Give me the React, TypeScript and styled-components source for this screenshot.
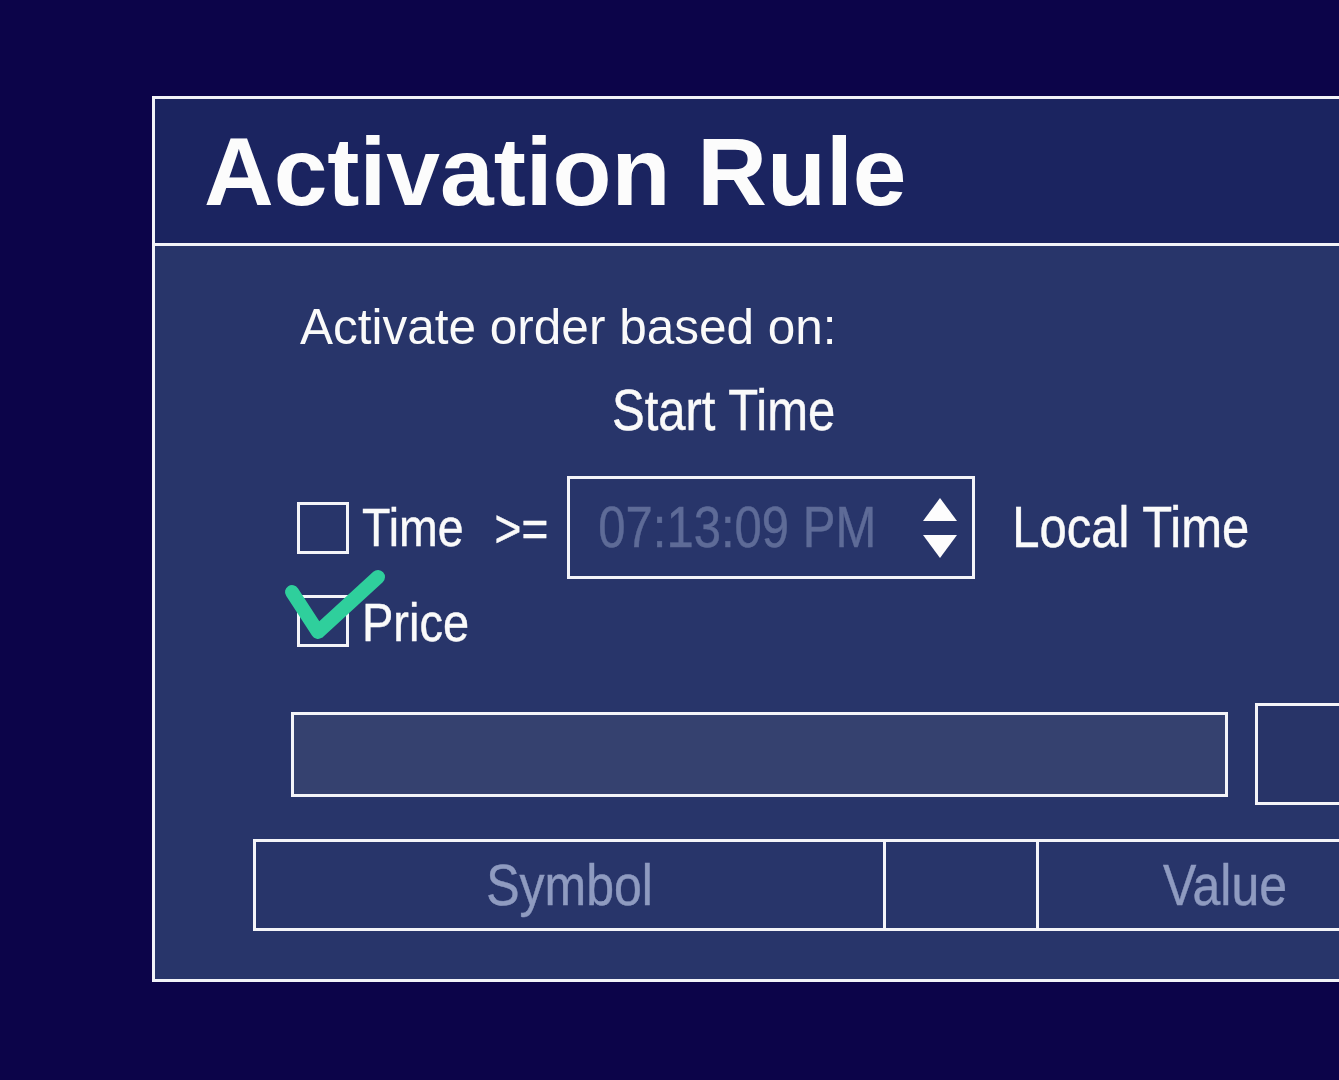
import React from 'react'
import styled, { createGlobalStyle } from 'styled-components'

const GlobalStyle = createGlobalStyle`
    html, body {
        margin: 0;
        padding: 0;
        background: #0c0449;
        overflow: hidden;
    }
    body {
        font-family: "Liberation Sans", Arial, sans-serif;
        color: #fafafa;
    }
`

const Page = styled.div`
    width: 1339px;
    height: 1080px;
    overflow: hidden;
    box-sizing: border-box;
    padding: 96px 0 0 152px;
    background: #0c0449;
`

const Panel = styled.section`
    width: 1300px;
    border: 3px solid #f2f3f8;
    display: flex;
    flex-direction: column;
`

const Header = styled.header`
    height: 147px;
    box-sizing: border-box;
    display: flex;
    align-items: center;
    padding: 3px 0 0 49px;
    background: #1b2460;
    border-bottom: 3px solid #f2f3f8;
`

const Title = styled.h1`
    margin: 0;
    font-size: 96.5px;
    font-weight: 700;
    line-height: 1;
    color: #fcfcfc;
`

const Body = styled.div`
    display: flex;
    flex-direction: column;
    padding: 52px 0 48px;
    background: #28356a;
`

const Prompt = styled.div`
    height: 56px;
    margin-left: 145px;
    display: flex;
    align-items: center;
    font-size: 49.5px;
`

// the dialog's labels are set in a tall, condensed face: stretch a regular one
const Tall = styled.span<{ $size?: number; $color?: string }>`
    display: inline-block;
    font-size: ${(p) => p.$size ?? 49}px;
    line-height: 1;
    color: ${(p) => p.$color ?? 'inherit'};
    -webkit-text-stroke: 0.4px currentColor;
    transform: scaleY(1.16);
    white-space: nowrap;
`

const Caption = styled.div`
    height: 56px;
    margin: 28px 0 0 457px;
    display: flex;
    align-items: center;
`

const Row = styled.div<{ $top: number; $height: number; $left: number }>`
    display: flex;
    align-items: center;
    margin-top: ${(p) => p.$top}px;
    margin-left: ${(p) => p.$left}px;
    height: ${(p) => p.$height}px;
`

const CheckBox = styled.div`
    position: relative;
    flex: none;
    width: 52px;
    height: 52px;
    box-sizing: border-box;
    border: 3px solid #f4f4f8;
`

const CheckMark = styled.svg`
    position: absolute;
    left: -23px;
    top: -38px;
    width: 120px;
    height: 100px;
    overflow: visible;
`

const Gap = styled.span<{ $w: number }>`
    flex: none;
    width: ${(p) => p.$w}px;
`

const TimeInput = styled.div`
    flex: none;
    width: 408px;
    height: 103px;
    box-sizing: border-box;
    border: 3px solid #f4f4f8;
    display: flex;
    align-items: center;
    justify-content: space-between;
    padding: 0 15px 0 28px;
`

const Spinner = styled.div`
    display: flex;
    flex-direction: column;
    gap: 14px;
`

const Arrow = styled.div<{ $down?: boolean }>`
    width: 0;
    height: 0;
    border-left: 17px solid transparent;
    border-right: 17px solid transparent;
    ${(p) => (p.$down ? 'border-top: 23px solid #fdfdfd;' : 'border-bottom: 23px solid #fdfdfd;')}
`

const Bar = styled.div`
    flex: none;
    width: 937px;
    height: 85px;
    box-sizing: border-box;
    border: 3px solid #f4f4f8;
    background: #35416f;
`

const SideBox = styled.div`
    flex: none;
    margin-left: 27px;
    width: 200px;
    height: 102px;
    box-sizing: border-box;
    border: 3px solid #f4f4f8;
    background: #283468;
`

const Table = styled.div`
    margin: 34px 0 0 98px;
    height: 92px;
    box-sizing: border-box;
    display: grid;
    grid-template-columns: 627px 153px 375px;
    border: 3px solid #f4f4f8;
    border-right: none;
`

const HeadCell = styled.div<{ $first?: boolean }>`
    display: flex;
    align-items: center;
    justify-content: center;
    border-left: ${(p) => (p.$first ? 'none' : '3px solid #f4f4f8')};
`

const columns = ['Symbol', '', 'Value']

const App = () => (
    <>
        <GlobalStyle />
        <Page>
            <Panel>
                <Header>
                    <Title>Activation Rule</Title>
                </Header>
                <Body>
                    <Prompt>Activate order based on:</Prompt>
                    <Caption>
                        <Tall>Start Time</Tall>
                    </Caption>

                    <Row $top={38} $height={103} $left={142}>
                        <CheckBox />
                        <Gap $w={13} />
                        <Tall $size={46.5}>Time</Tall>
                        <Gap $w={31} />
                        <Tall $size={46}>&gt;=</Tall>
                        <Gap $w={19} />
                        <TimeInput>
                            <Tall $color='#5e6b97'>07:13:09 PM</Tall>
                            <Spinner>
                                <Arrow />
                                <Arrow $down />
                            </Spinner>
                        </TimeInput>
                        <Gap $w={37} />
                        <Tall>Local Time</Tall>
                    </Row>

                    <Row $top={14} $height={56} $left={142}>
                        <CheckBox>
                            <CheckMark viewBox='0 0 120 100'>
                                <polyline
                                    points='15,32 41,72 101,17'
                                    fill='none'
                                    stroke='#2fcf9c'
                                    strokeWidth='14'
                                    strokeLinecap='round'
                                    strokeLinejoin='round'
                                />
                            </CheckMark>
                        </CheckBox>
                        <Gap $w={13} />
                        <Tall $size={47}>Price</Tall>
                    </Row>

                    <Row $top={54} $height={102} $left={136}>
                        <Bar />
                        <SideBox />
                    </Row>

                    <Table>
                        {columns.map((col, i) => (
                            <HeadCell key={i} $first={i === 0}>
                                {col && <Tall $size={50} $color='#8f9bc0'>{col}</Tall>}
                            </HeadCell>
                        ))}
                    </Table>
                </Body>
            </Panel>
        </Page>
    </>
)

export default App
